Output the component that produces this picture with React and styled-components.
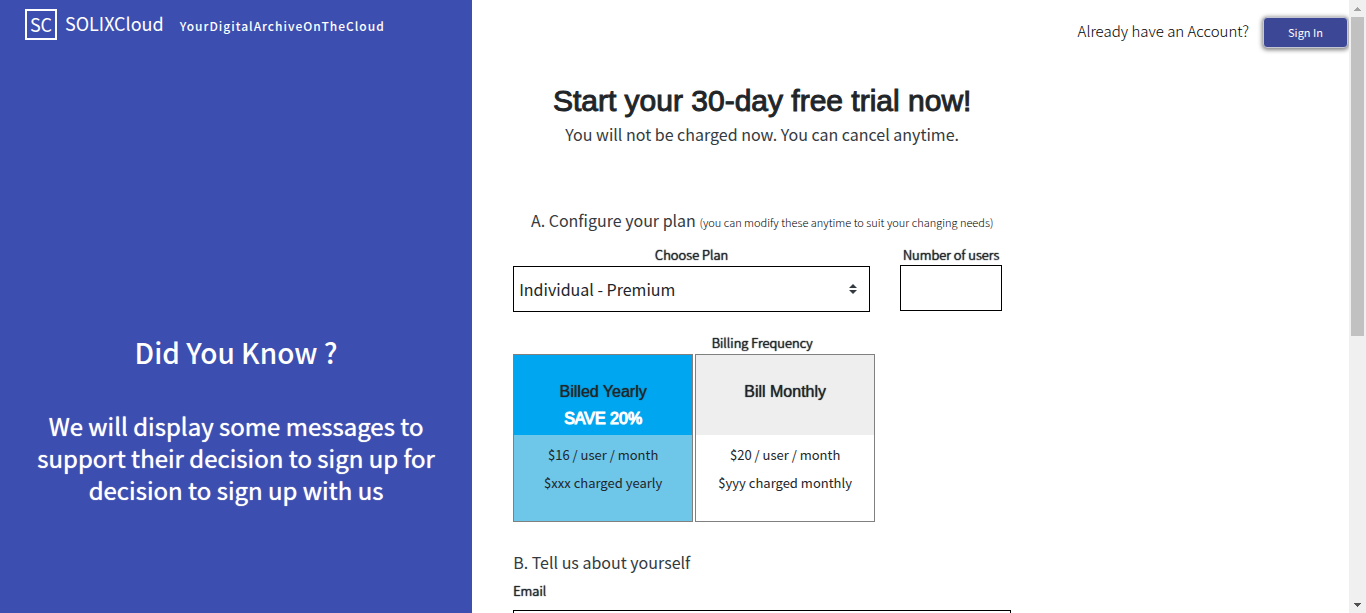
import React from "react";
import styled, { createGlobalStyle } from "styled-components";

const sans = `"Noto Sans CJK SC", "Noto Sans", sans-serif`;
const display = `"Liberation Sans", Arial, sans-serif`;

const GlobalStyle = createGlobalStyle`
  *, *::before, *::after { box-sizing: border-box; }
  body { margin: 0; font-family: ${sans}; color: #212529; background: #fff; }
  h1, h2, h3, p, fieldset { margin: 0; padding: 0; border: 0; font-weight: 400; }
  input, select, button { font-family: inherit; }
`;

const Page = styled.div`
  display: flex;
  height: 100vh;
  overflow: hidden;
`;

const Promo = styled.aside`
  flex: 35 1 0;
  display: flex;
  flex-direction: column;
  background: #3c4eb0;
  color: #fff;
`;

const Brand = styled.a`
  display: flex;
  align-items: flex-start;
  padding: 9px 25px;
  color: #fff;
  text-decoration: none;
  line-height: 29px;
`;

const Monogram = styled.span`
  width: 32px;
  border: 2px solid #fff;
  font-size: 18px;
  line-height: 27px;
  text-align: center;
`;

const BrandName = styled.span`
  margin-left: 8px;
  font-size: 18px;
`;

const Tagline = styled.span`
  margin-left: 16px;
  padding-top: 5px;
  font-size: 12px;
  font-weight: 500;
  line-height: 24px;
  letter-spacing: 1px;
`;

const Facts = styled.section`
  padding: 281px 24px 0;
  text-align: center;
`;

const FactTitle = styled.h2`
  font-size: 28px;
  font-weight: 500;
  line-height: 44px;
`;

const FactText = styled.p`
  margin: 36px auto 0;
  font-size: 24px;
  line-height: 32px;
  text-shadow: 0 0 1px currentColor;
`;

const Main = styled.main`
  flex: 65 1 0;
  min-width: 0;
  display: flex;
  flex-direction: column;
`;

const TopBar = styled.header`
  display: flex;
  justify-content: flex-end;
  align-items: flex-start;
  gap: 14px;
  padding: 17px 1px 0 0;
  color: #000;
  font-size: 15px;
  font-weight: 300;
  line-height: 28px;
`;

const SignIn = styled.button`
  width: 85px;
  height: 31px;
  padding: 0 6px 2px;
  border: 1px solid #c4c6d4;
  border-radius: 4px;
  background: #3c4896;
  box-shadow: 0 1px 4px 1px rgba(0, 0, 0, 0.5);
  color: #fff;
  font-size: 11px;
`;

const Form = styled.form`
  width: 57%;
  max-width: 498px;
  margin: 34px 0 0 41px;
  display: flex;
  flex-direction: column;
  text-align: center;
`;

const Title = styled.h1`
  font-family: ${display};
  font-size: 30px;
  line-height: 38px;
  -webkit-text-stroke: 1px currentColor;
`;

const Lead = styled.p`
  color: #343a40;
  font-size: 16px;
  line-height: 28px;
`;

const SectionTitle = styled.h2`
  margin-top: ${(p) => p.$gap}px;
  color: #343a40;
  font-size: 16px;
  line-height: 28px;
  text-align: ${(p) => p.$align || "center"};
`;

const Hint = styled.small`
  color: #000;
  font-size: 11px;
  font-weight: 300;
`;

const Row = styled.div`
  display: flex;
  align-items: flex-start;
  gap: 30px;
  margin-top: 9px;
`;

const Field = styled.div`
  width: ${(p) => p.$width};
  display: flex;
  flex-direction: column;
`;

const Label = styled.label`
  padding-bottom: 1px;
  font-size: 13px;
  font-weight: 300;
  line-height: 19px;
  text-align: ${(p) => p.$align || "center"};
  text-shadow: 0 0 1px currentColor, 0 0 1px currentColor;
  white-space: nowrap;
`;

const SelectBox = styled.div`
  display: grid;
  align-items: center;
  margin-top: 1px;

  & > * { grid-area: 1 / 1; }
  & > svg { justify-self: end; margin-right: 13px; pointer-events: none; }
`;

const Select = styled.select`
  appearance: none;
  width: 100%;
  height: 46px;
  padding: 0 5px;
  border: 1px solid #000;
  border-radius: 0;
  background: #fff;
  color: #212529;
  font-size: 16px;
`;

const Input = styled.input`
  width: 100%;
  height: 46px;
  padding: 0 6px;
  border: 1px solid #000;
  border-radius: 0;
  font-size: 16px;
`;

const Billing = styled.fieldset`
  margin-top: 20px;
  min-width: 0;
`;

const Legend = styled.legend`
  width: 100%;
  padding: 0;
  font-size: 13px;
  font-weight: 300;
  line-height: 22px;
  text-shadow: 0 0 1px currentColor, 0 0 1px currentColor;
`;

const Options = styled.div`
  display: flex;
  gap: 2px;
`;

const Option = styled.button`
  width: 180px;
  height: 168px;
  padding: 0;
  display: flex;
  flex-direction: column;
  border: 1px solid #808080;
  background: ${(p) => (p.$active ? "#6ec6e9" : "#fff")};
  color: #212529;
`;

const OptionHead = styled.span`
  width: 100%;
  height: 80px;
  padding-top: 23px;
  background: ${(p) => (p.$active ? "#00a6ef" : "#eee")};
  font-family: ${display};
  font-size: 16px;
  line-height: 27px;
  text-shadow: 0 0 1px currentColor;
`;

const Saving = styled.span`
  display: block;
  color: #fff;
  -webkit-text-stroke: 1px currentColor;
`;

const OptionBody = styled.span`
  width: 100%;
  padding-top: 6px;
  font-size: 13px;
  line-height: 28px;
`;

const Line = styled.span`
  display: block;
`;

const EmailField = styled(Field)`
  margin-top: 5px;
  gap: 9px;
`;

const ScrollTrack = styled.div`
  flex: none;
  width: 17px;
  display: flex;
  flex-direction: column;
  align-items: center;
  background: #f0f0f0;
`;

const ScrollThumb = styled.div`
  width: 13px;
  height: 52%;
  margin-bottom: auto;
  background: #c1c1c1;
`;

function ScrollArrow({ down, color }) {
  return (
    <svg width="17" height="17" viewBox="0 0 17 17" fill={color} shapeRendering="crispEdges">
      {down ? <path d="M5 7h7v1h-1v1h-1v1h-1v1H8v-1H7V9H6V8H5z" /> : <path d="M5 11h7v-1h-1V9h-1V8H9V7H8v1H7v1H6v1H5z" />}
    </svg>
  );
}

const plans = [
  { id: "yearly", name: "Billed Yearly", saving: "SAVE 20%", price: "$16 / user / month", note: "$xxx charged yearly" },
  { id: "monthly", name: "Bill Monthly", price: "$20 / user / month", note: "$yyy charged monthly" },
];

export default function App() {
  const [billing, setBilling] = React.useState("yearly");
  return (
    <Page>
      <GlobalStyle />
      <Promo>
        <Brand href="#">
          <Monogram>SC</Monogram>
          <BrandName>SOLIXCloud</BrandName>
          <Tagline>YourDigitalArchiveOnTheCloud</Tagline>
        </Brand>
        <Facts>
          <FactTitle>Did You Know ?</FactTitle>
          <FactText>We will display some messages to support their decision to sign up for decision to sign up with us</FactText>
        </Facts>
      </Promo>
      <Main>
        <TopBar>
          <span>Already have an Account?</span>
          <SignIn type="button">Sign In</SignIn>
        </TopBar>
        <Form>
          <Title>Start your 30-day free trial now!</Title>
          <Lead>You will not be charged now. You can cancel anytime.</Lead>
          <SectionTitle $gap={58}>
            A. Configure your plan <Hint>(you can modify these anytime to suit your changing needs)</Hint>
          </SectionTitle>
          <Row>
            <Field $width="357px">
              <Label htmlFor="plan">Choose Plan</Label>
              <SelectBox>
                <Select id="plan">
                  <option>Individual - Premium</option>
                </Select>
                <svg width="8" height="10" viewBox="0 0 8 10" fill="#343a40">
                  <path d="M4 0L0 4h8zM4 10L0 6h8z" />
                </svg>
              </SelectBox>
            </Field>
            <Field $width="102px">
              <Label htmlFor="users">Number of users</Label>
              <Input id="users" type="text" />
            </Field>
          </Row>
          <Billing>
            <Legend>Billing Frequency</Legend>
            <Options>
              {plans.map((p) => (
                <Option key={p.id} type="button" $active={billing === p.id} aria-pressed={billing === p.id} onClick={() => setBilling(p.id)}>
                  <OptionHead $active={billing === p.id}>
                    {p.name}
                    {p.saving && <Saving>{p.saving}</Saving>}
                  </OptionHead>
                  <OptionBody>
                    <Line>{p.price}</Line>
                    <Line>{p.note}</Line>
                  </OptionBody>
                </Option>
              ))}
            </Options>
          </Billing>
          <SectionTitle $gap={26} $align="left">B. Tell us about yourself</SectionTitle>
          <EmailField $width="100%">
            <Label htmlFor="email" $align="left">Email</Label>
            <Input id="email" type="email" />
          </EmailField>
        </Form>
      </Main>
      <ScrollTrack aria-hidden="true">
        <ScrollArrow color="#a3a3a3" />
        <ScrollThumb />
        <ScrollArrow down color="#505050" />
      </ScrollTrack>
    </Page>
  );
}
